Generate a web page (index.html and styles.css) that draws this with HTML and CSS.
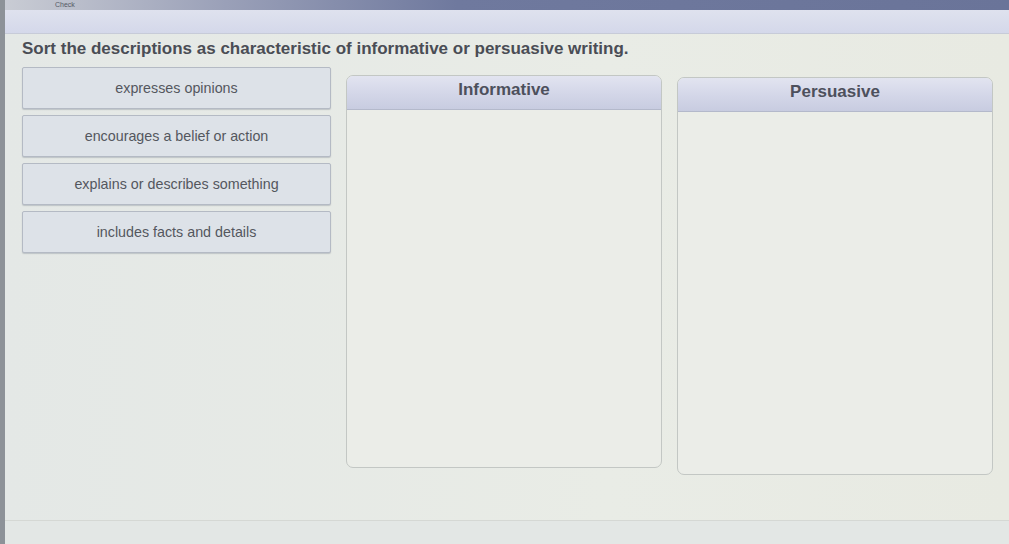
FILE: index.html
```html
<!DOCTYPE html>
<html lang="en">
<head>
<meta charset="utf-8">
<title>Sort the descriptions</title>
<link rel="stylesheet" href="styles.css">
</head>
<body>
<div class="screen">
  <div class="topbar"><span class="check">Check</span></div>
  <div class="toolbar"></div>
  <main class="content">
    <h1 class="prompt">Sort the descriptions as characteristic of informative or persuasive writing.</h1>
    <div class="board">
      <div class="cards">
        <div class="card">expresses opinions</div>
        <div class="card">encourages a belief or action</div>
        <div class="card">explains or describes something</div>
        <div class="card">includes facts and details</div>
      </div>
      <section class="bin bin-info">
        <div class="bin-head">Informative</div>
        <div class="bin-body"></div>
      </section>
      <section class="bin bin-pers">
        <div class="bin-head">Persuasive</div>
        <div class="bin-body"></div>
      </section>
    </div>
  </main>
  <div class="footer"></div>
</div>
</body>
</html>
```

FILE: styles.css
```css
* { box-sizing: border-box; }

html, body {
  margin: 0;
  padding: 0;
}

body {
  width: 1009px;
  height: 544px;
  overflow: hidden;
  background: #e6e9e4;
  font-family: "Liberation Sans", Arial, sans-serif;
  color: #4c4f57;
}

.screen {
  width: 1009px;
  height: 544px;
  display: flex;
  flex-direction: column;
  border-left: 5px solid #8d9298;
  background: linear-gradient(90deg, #e4e8e6 0%, #e9ece6 60%, #e8eae2 100%);
}

.topbar {
  height: 10px;
  background: linear-gradient(90deg, #c9ccd4 0%, #9aa0b8 22%, #6f799e 45%, #6a7499 100%);
  display: flex;
  align-items: center;
}

.check {
  font-size: 7px;
  color: #555a66;
  margin-left: 50px;
  line-height: 10px;
}

.toolbar {
  height: 24px;
  background: linear-gradient(180deg, #dfe2ee 0%, #d4d8ea 100%);
  border-bottom: 1px solid #c7cbd8;
}

.content {
  flex: 1;
  padding: 5px 0 0 17px;
}

.prompt {
  margin: 0;
  font-size: 17px;
  font-weight: bold;
  color: #4a4d55;
  line-height: 20px;
}

.board {
  display: flex;
  align-items: flex-start;
  gap: 15px;
  margin-top: 8px;
}

.cards {
  width: 309px;
  display: flex;
  flex-direction: column;
  gap: 6px;
}

.card {
  height: 42px;
  display: flex;
  align-items: center;
  justify-content: center;
  background: #dde2e8;
  border: 1px solid #b4bac4;
  border-radius: 2px;
  box-shadow: 0 1px 1px rgba(120, 128, 140, 0.35);
  font-size: 14.3px;
  color: #54575e;
}

.bin {
  width: 316px;
  background: #ebede8;
  border: 1px solid #c3c7c4;
  border-radius: 7px;
  overflow: hidden;
}

.bin-info {
  margin-top: 8px;
  height: 393px;
}

.bin-pers {
  margin-top: 10px;
  height: 398px;
}

.bin-head {
  height: 34px;
  display: flex;
  align-items: center;
  justify-content: center;
  background: linear-gradient(180deg, #e2e4f0 0%, #d3d6e8 55%, #c8cce0 100%);
  border-bottom: 1px solid #b4b9cb;
  font-size: 17px;
  font-weight: bold;
  color: #4d505c;
  padding-bottom: 5px;
}

.bin-body {
  height: 100%;
}

.footer {
  height: 24px;
  border-top: 1px solid #d5d8d4;
  background: #e3e7e5;
}
```
